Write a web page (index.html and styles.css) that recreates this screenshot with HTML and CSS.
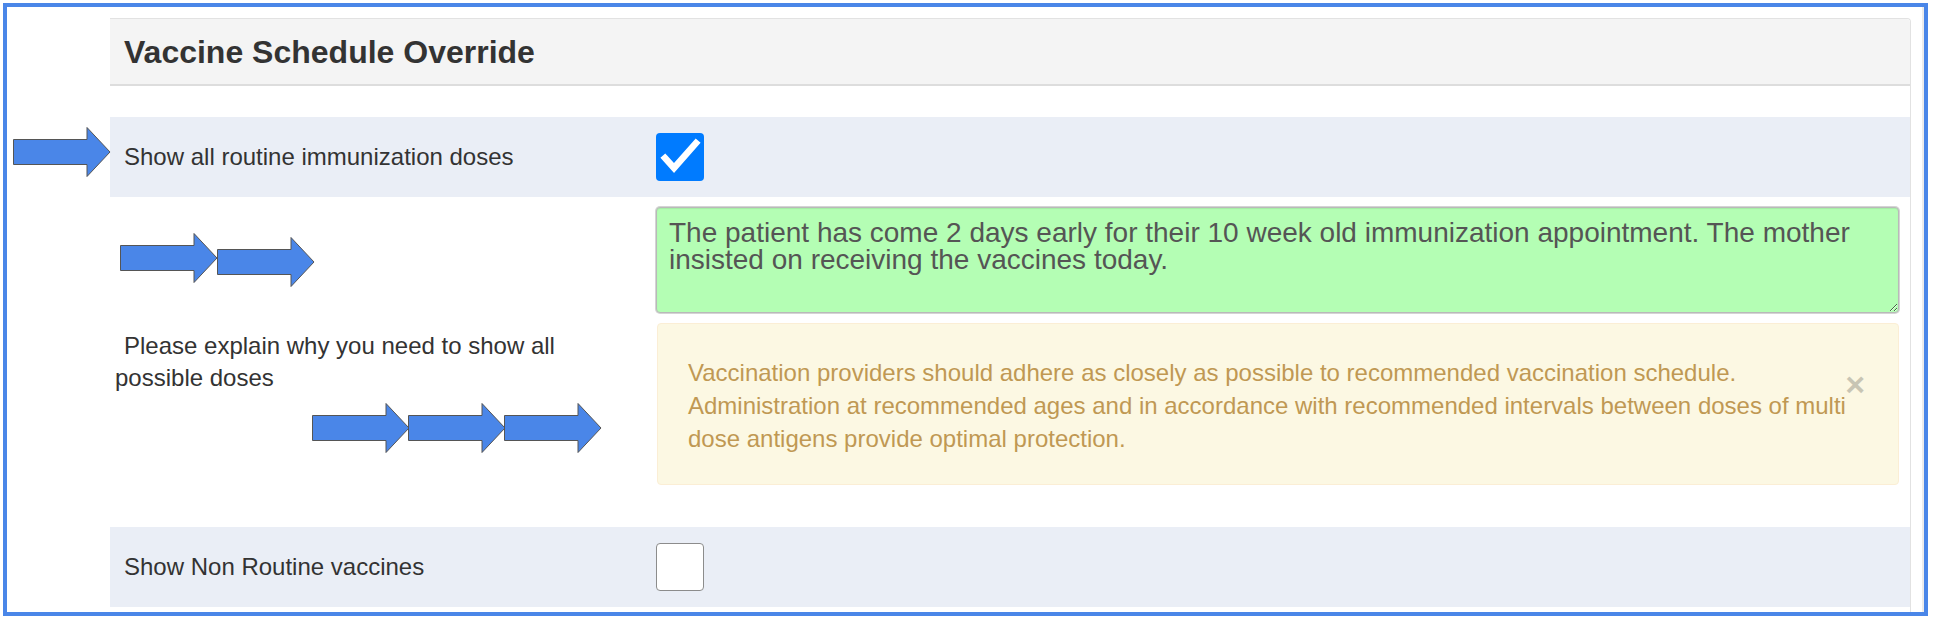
FILE: index.html
```html
<!DOCTYPE html>
<html lang="en">
<head>
<meta charset="utf-8">
<title>Vaccine Schedule Override</title>
<link rel="stylesheet" href="styles.css">
</head>
<body>
<div class="frame">
  <div class="panel">
    <div class="panel-heading">
      <h3 class="panel-title">Vaccine Schedule Override</h3>
    </div>
    <div class="panel-body">
      <div class="form-row band">
        <label class="row-label">Show all routine immunization doses</label>
        <div class="row-control">
          <span class="check checked">
            <svg viewBox="0 0 48 48" width="48" height="48" aria-hidden="true">
              <path d="M9 25 L18 35 L40 10" fill="none" stroke="#fff" stroke-width="6.5" stroke-linecap="square" stroke-linejoin="miter"/>
            </svg>
          </span>
        </div>
      </div>
      <div class="form-row reason">
        <label class="row-label reason-label">Please explain why you need to show all possible doses</label>
        <div class="row-control stack">
          <textarea class="reason-text" rows="3">The patient has come 2 days early for their 10 week old immunization appointment. The mother insisted on receiving the vaccines today.</textarea>
          <div class="alert">
            <button class="close" type="button">&times;</button>
            Vaccination providers should adhere as closely as possible to recommended vaccination schedule. Administration at recommended ages and in accordance with recommended intervals between doses of multi dose antigens provide optimal protection.
          </div>
        </div>
      </div>
      <div class="form-row band">
        <label class="row-label">Show Non Routine vaccines</label>
        <div class="row-control">
          <span class="check"></span>
        </div>
      </div>
    </div>
  </div>

  <svg class="arrow arrow-1" viewBox="0 0 98 50" width="98" height="50" aria-hidden="true"><polygon points="0.5,12.5 74,12.5 74,0.5 97,25 74,49.5 74,37.5 0.5,37.5"/></svg>
  <svg class="arrow arrow-2" viewBox="0 0 98 50" width="98" height="50" aria-hidden="true"><polygon points="0.5,12.5 74,12.5 74,0.5 97,25 74,49.5 74,37.5 0.5,37.5"/></svg>
  <svg class="arrow arrow-3" viewBox="0 0 98 50" width="98" height="50" aria-hidden="true"><polygon points="0.5,12.5 74,12.5 74,0.5 97,25 74,49.5 74,37.5 0.5,37.5"/></svg>
  <svg class="arrow arrow-4" viewBox="0 0 98 50" width="98" height="50" aria-hidden="true"><polygon points="0.5,12.5 74,12.5 74,0.5 97,25 74,49.5 74,37.5 0.5,37.5"/></svg>
  <svg class="arrow arrow-5" viewBox="0 0 98 50" width="98" height="50" aria-hidden="true"><polygon points="0.5,12.5 74,12.5 74,0.5 97,25 74,49.5 74,37.5 0.5,37.5"/></svg>
  <svg class="arrow arrow-6" viewBox="0 0 98 50" width="98" height="50" aria-hidden="true"><polygon points="0.5,12.5 74,12.5 74,0.5 97,25 74,49.5 74,37.5 0.5,37.5"/></svg>
</div>
</body>
</html>
```
FILE: styles.css
```css
html, body {
  margin: 0;
  padding: 0;
  background: #ffffff;
}

body {
  font-family: "Liberation Sans", Arial, Helvetica, sans-serif;
  color: #333333;
}

.frame {
  position: relative;
  box-sizing: border-box;
  margin: 3px 0 0 3px;
  width: 1925px;
  height: 613px;
  border: 4px solid #4a86e8;
  overflow: hidden;
  background: #ffffff;
  box-shadow: inset -2px 0 0 #ececec;
}

.panel {
  margin: 11px 0 0 103px;
  width: 1801px;
  box-sizing: border-box;
  border: 1px solid #e2e2e2;
  border-left: none;
  border-radius: 0 4px 0 0;
  background: #ffffff;
  height: 700px;
}

.panel-heading {
  height: 65px;
  display: flex;
  align-items: center;
  padding-left: 14px;
  background: #f4f4f4;
  border-bottom: 2px solid #dddddd;
  border-radius: 0 4px 0 0;
}

.panel-title {
  margin: 0;
  font-size: 32px;
  font-weight: bold;
  line-height: 36px;
  color: #333333;
}

.panel-body {
  padding-top: 31px;
}

.form-row {
  display: grid;
  grid-template-columns: 546px 1fr;
}

.band {
  height: 80px;
  align-items: center;
  background: #eaeef6;
}

.row-label {
  font-size: 24px;
  line-height: 32px;
  color: #333333;
  padding-left: 14px;
}

.row-control {
  padding-right: 11px;
  display: flex;
}

.reason {
  align-items: center;
}

.reason-label {
  padding-left: 5px;
  padding-right: 30px;
  text-indent: 9px;
}

.stack {
  flex-direction: column;
  padding-top: 10px;
  padding-bottom: 42px;
}

.check {
  display: block;
  box-sizing: border-box;
  width: 48px;
  height: 48px;
  border-radius: 4px;
  border: 1px solid #8c8c8c;
  background: #ffffff;
}

.check.checked {
  border: none;
  background: #007bff;
}

.check svg {
  display: block;
}

.reason-text {
  display: block;
  box-sizing: border-box;
  margin: 0;
  width: 100%;
  height: 106px;
  padding: 11px 12px 9px;
  font-family: "Liberation Sans", Arial, Helvetica, sans-serif;
  font-size: 28px;
  line-height: 27px;
  color: #555555;
  background: #b4feb4;
  border: 1px solid #b9b9b9;
  border-radius: 4px;
  box-shadow: inset 0 1px 1px rgba(0, 0, 0, 0.08), 0 0 0 1px #d4d4d4;
  overflow: hidden;
}

.alert {
  position: relative;
  box-sizing: border-box;
  margin: 10px 0 0 1px;
  padding: 32px 40px 29px 30px;
  font-size: 24px;
  line-height: 33px;
  color: #c09853;
  background: #fcf8e3;
  border: 1px solid #fbeed5;
  border-radius: 4px;
}

.close {
  position: absolute;
  right: 33px;
  top: 43px;
  padding: 0;
  margin: 0;
  border: 0;
  background: none;
  font-family: "Liberation Sans", Arial, Helvetica, sans-serif;
  font-size: 34px;
  font-weight: bold;
  line-height: 34px;
  color: #000000;
  opacity: 0.2;
}

.arrow {
  position: absolute;
  fill: #4a86e8;
  stroke: #555555;
  stroke-width: 1;
}

.arrow-1 { left: 6px;   top: 120px; }
.arrow-2 { left: 113px; top: 226px; }
.arrow-3 { left: 210px; top: 230px; }
.arrow-4 { left: 305px; top: 396px; }
.arrow-5 { left: 401px; top: 396px; }
.arrow-6 { left: 497px; top: 396px; }
```
